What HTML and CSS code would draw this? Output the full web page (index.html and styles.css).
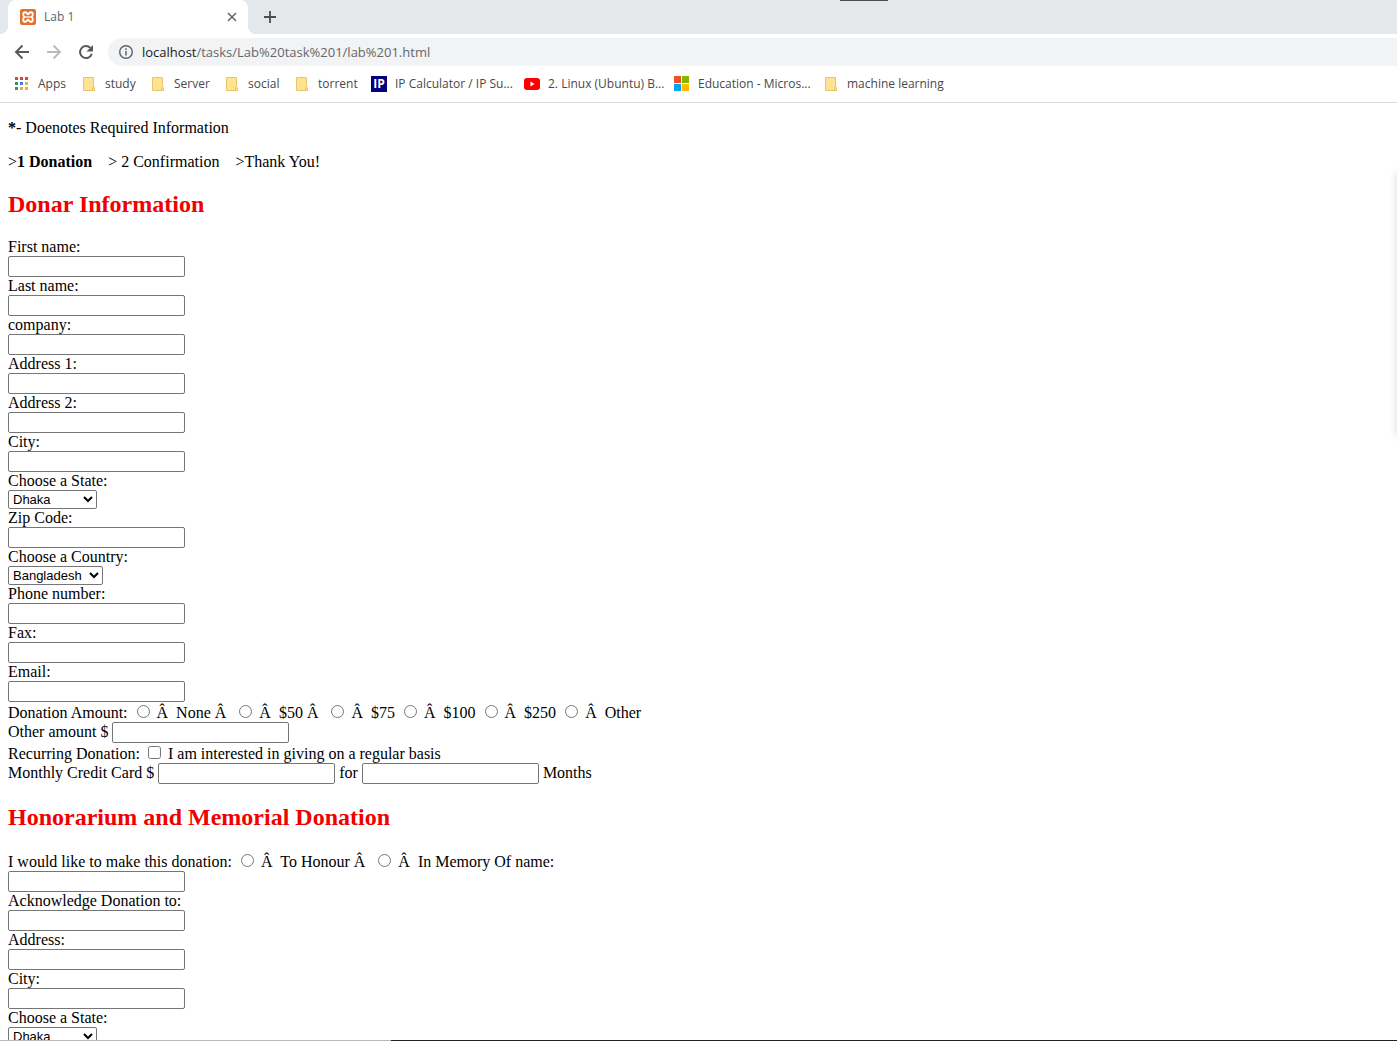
FILE: index.html
```html
<!DOCTYPE html>
<html lang="en">
<head>
<meta charset="utf-8">
<title>Lab 1</title>
<link rel="stylesheet" href="styles.css">
</head>
<body>
<div class="browser">
  <header class="chrome">
    <div class="tab-strip">
      <div class="tab">
        <svg class="favicon" width="16" height="16" viewBox="0 0 16 16" aria-hidden="true"><rect width="16" height="16" rx="2" fill="#e0712c"/><path d="M5.300 3.200C2.600 3.200 2.600 6.800 4.600 8C2.600 9.200 2.600 12.800 5.300 12.800C7.300 12.800 7 10.600 8 10.600C9 10.600 8.700 12.800 10.700 12.800C13.400 12.800 13.400 9.200 11.400 8C13.400 6.800 13.400 3.200 10.700 3.200C8.700 3.200 9 5.400 8 5.400C7 5.400 7.300 3.200 5.300 3.200Z" fill="none" stroke="#fff" stroke-width="1.900"/><path d="M5.500 8H10.500" stroke="#fff" stroke-width="1.300"/></svg>
        <span class="tab-title">Lab 1</span>
        <button class="icon-button" type="button" aria-label="Close tab"><svg width="16" height="16" viewBox="0 0 16 16"><path d="M4 4l8 8M12 4l-8 8" stroke="#5f6368" stroke-width="1.500"/></svg></button>
      </div>
      <button class="icon-button new-tab" type="button" aria-label="New tab"><svg width="16" height="16" viewBox="0 0 16 16"><path d="M8 2v12M2 8h12" stroke="#4a4d51" stroke-width="1.800"/></svg></button>
    </div>
    <div class="toolbar">
      <button class="icon-button" type="button" aria-label="Back"><svg width="16" height="16" viewBox="0 0 16 16"><path d="M15 8H2M8.500 1.500L2 8l6.500 6.500" fill="none" stroke="#55585d" stroke-width="1.900"/></svg></button>
      <button class="icon-button" type="button" aria-label="Forward"><svg width="16" height="16" viewBox="0 0 16 16"><path d="M1 8h13M7.500 1.500L14 8l-6.500 6.500" fill="none" stroke="#b9bbbe" stroke-width="1.900"/></svg></button>
      <button class="icon-button" type="button" aria-label="Reload"><svg width="16" height="16" viewBox="0 0 16 16"><path d="M13.800 9.800A6 6 0 1 1 12.400 3.900" fill="none" stroke="#55585d" stroke-width="2"/><path d="M15 1v6.500H8.500z" fill="#55585d"/></svg></button>
      <div class="address">
        <svg width="16" height="16" viewBox="0 0 16 16" aria-hidden="true"><circle cx="8" cy="8" r="6.300" fill="none" stroke="#5f6368" stroke-width="1.400"/><path d="M8 7v4.500M8 4.300v1.600" stroke="#5f6368" stroke-width="1.500"/></svg>
        <span>localhost<span class="address-path">/tasks/Lab%20task%201/lab%201.html</span></span>
      </div>
    </div>
    <nav class="bookmarks" aria-label="Bookmarks">
      <a href="#"><svg width="16" height="16" viewBox="0 0 16 16"><path d="M1 1h3v3H1zM6 1h3v3H6zM11 1h3v3h-3z" fill="#d4483d"/><path d="M1 6h3v3H1zM1 11h3v3H1z" fill="#35945a"/><path d="M6 6h3v3H6z" fill="#3b80e0"/><path d="M11 6h3v3h-3zM6 11h3v3H6zM11 11h3v3h-3z" fill="#e2b13a"/></svg>Apps</a>
      <a href="#"><svg width="16" height="16" viewBox="0 0 16 16"><path d="M2.500 1.500h10v9l1 1v3h-11z" fill="#ffe392" stroke="#e6c765"/><path d="M11.500 14v-2.500l1-1" fill="none" stroke="#e6c765"/></svg>study</a>
      <a href="#"><svg width="16" height="16" viewBox="0 0 16 16"><path d="M2.500 1.500h10v9l1 1v3h-11z" fill="#ffe392" stroke="#e6c765"/><path d="M11.500 14v-2.500l1-1" fill="none" stroke="#e6c765"/></svg>Server</a>
      <a href="#"><svg width="16" height="16" viewBox="0 0 16 16"><path d="M2.500 1.500h10v9l1 1v3h-11z" fill="#ffe392" stroke="#e6c765"/><path d="M11.500 14v-2.500l1-1" fill="none" stroke="#e6c765"/></svg>social</a>
      <a href="#"><svg width="16" height="16" viewBox="0 0 16 16"><path d="M2.500 1.500h10v9l1 1v3h-11z" fill="#ffe392" stroke="#e6c765"/><path d="M11.500 14v-2.500l1-1" fill="none" stroke="#e6c765"/></svg>torrent</a>
      <a href="#"><span class="ip-icon" aria-hidden="true">IP</span>IP Calculator / IP Su...</a>
      <a href="#"><svg width="16" height="16" viewBox="0 0 16 16"><rect y="2" width="16" height="12" rx="3" fill="#f00"/><path d="M6.500 5.600v4.800l4-2.400z" fill="#fff"/></svg>2. Linux (Ubuntu) B...</a>
      <a href="#"><svg width="16" height="16" viewBox="0 0 16 16"><path d="M0 0h7v7H0z" fill="#f25022"/><path d="M8 0h7v7H8z" fill="#7fba00"/><path d="M0 8h7v7H0z" fill="#00a4ef"/><path d="M8 8h7v7H8z" fill="#ffb900"/></svg>Education - Micros...</a>
      <a href="#"><svg width="16" height="16" viewBox="0 0 16 16"><path d="M2.500 1.500h10v9l1 1v3h-11z" fill="#ffe392" stroke="#e6c765"/><path d="M11.500 14v-2.500l1-1" fill="none" stroke="#e6c765"/></svg>machine learning</a>
    </nav>
  </header>
  <main class="page">
    <p><b>*</b>- Doenotes Required Information</p>
    <p>&gt;<b>1 Donation</b> &nbsp;&nbsp; &gt; 2 Confirmation &nbsp;&nbsp; &gt;Thank You!</p>
    <form>
      <h2>Donar Information</h2>
      <div class="field"><label for="first">First name:</label><input type="text" id="first"></div>
      <div class="field"><label for="last">Last name:</label><input type="text" id="last"></div>
      <div class="field"><label for="company">company:</label><input type="text" id="company"></div>
      <div class="field"><label for="address1">Address 1:</label><input type="text" id="address1"></div>
      <div class="field"><label for="address2">Address 2:</label><input type="text" id="address2"></div>
      <div class="field"><label for="city">City:</label><input type="text" id="city"></div>
      <div class="field"><label for="state">Choose a State:</label><select id="state"><option>Dhaka</option><option>Chittagong</option></select></div>
      <div class="field"><label for="zip">Zip Code:</label><input type="text" id="zip"></div>
      <div class="field"><label for="country">Choose a Country:</label><select id="country" class="country"><option>Bangladesh</option></select></div>
      <div class="field"><label for="phone">Phone number:</label><input type="text" id="phone"></div>
      <div class="field"><label for="fax">Fax:</label><input type="text" id="fax"></div>
      <div class="field"><label for="email">Email:</label><input type="text" id="email"></div>
      <div class="choices">Donation Amount: <input type="radio" name="amount" id="a0"> <label for="a0">Â&nbsp; None Â&nbsp;</label> <input type="radio" name="amount" id="a50"> <label for="a50">Â&nbsp; $50 Â&nbsp;</label> <input type="radio" name="amount" id="a75"> <label for="a75">Â&nbsp; $75</label> <input type="radio" name="amount" id="a100"> <label for="a100">Â&nbsp; $100</label> <input type="radio" name="amount" id="a250"> <label for="a250">Â&nbsp; $250</label> <input type="radio" name="amount" id="other"> <label for="other">Â&nbsp; Other</label></div>
      <div class="inline-field"><label for="other-amount">Other amount $</label> <input type="text" id="other-amount"></div>
      <div class="choices">Recurring Donation: <input type="checkbox" id="recurring"> <label for="recurring">I am interested in giving on a regular basis</label></div>
      <div class="inline-field"><label for="monthly">Monthly Credit Card $</label> <input type="text" id="monthly"> <label for="months">for</label> <input type="text" id="months" aria-describedby="months-unit"> <span id="months-unit">Months</span></div>
      <h2>Honorarium and Memorial Donation</h2>
      <div class="choices">I would like to make this donation: <input type="radio" name="tribute" id="honour"> <label for="honour">Â&nbsp; To Honour Â&nbsp;</label> <input type="radio" name="tribute" id="memory"> <label for="memory">Â&nbsp; In Memory Of</label> <label for="tribute-name">name:</label></div>
      <div class="field"><input type="text" id="tribute-name"></div>
      <div class="field"><label for="ack">Acknowledge Donation to:</label><input type="text" id="ack"></div>
      <div class="field"><label for="ack-address">Address:</label><input type="text" id="ack-address"></div>
      <div class="field"><label for="ack-city">City:</label><input type="text" id="ack-city"></div>
      <div class="field"><label for="ack-state">Choose a State:</label><select id="ack-state"><option>Dhaka</option><option>Chittagong</option></select></div>
    </form>
  </main>
  <div class="window-edge"></div>
  <div class="top-mark"></div>
  <div class="side-shadow"></div>
</div>
</body>
</html>
```
FILE: styles.css
```css
* { box-sizing: border-box; }

body { margin: 0; background: #fff; }

.browser {
  position: relative;
  display: flex;
  flex-direction: column;
  height: 100vh;
  overflow: hidden;
}

.chrome {
  flex: none;
  border-bottom: 1px solid #d9dadc;
  font: 12px/16px "Open Sans", "Noto Sans", sans-serif;
  color: #47494d;
}

svg { display: block; flex: none; }

.icon-button {
  display: block;
  flex: none;
  padding: 0;
  border: 0;
  background: none;
}

.tab-strip {
  display: flex;
  height: 34px;
  padding-left: 8px;
  background: #e4e8eb;
}

.tab {
  position: relative;
  display: flex;
  align-items: center;
  gap: 8px;
  width: 240px;
  padding: 0 8px 0 12px;
  border-radius: 8px 8px 0 0;
  background: #fff;
  color: #5f6368;
}

/* Curved feet where the tab meets the toolbar */
.tab::before,
.tab::after {
  content: "";
  position: absolute;
  bottom: 0;
  width: 8px;
  height: 8px;
}
.tab::before { right: 100%; background: radial-gradient(circle at 0 0, transparent 8px, #fff 8px); }
.tab::after { left: 100%; background: radial-gradient(circle at 100% 0, transparent 8px, #fff 8px); }

.tab-title { flex: 1; }

.new-tab { margin-left: 14px; }

.toolbar {
  display: flex;
  align-items: center;
  gap: 16px;
  height: 36px;
  padding-left: 14px;
}

.address {
  display: flex;
  flex: 1;
  align-items: center;
  gap: 8px;
  height: 28px;
  margin-left: -2px;
  padding-left: 10px;
  border-radius: 14px 0 0 14px;
  background: #f1f3f4;
  font-size: 13px;
  color: #202124;
}

.address-path { color: #64686c; }

.bookmarks {
  display: grid;
  grid-template-columns: 67px 69px 74px 70px 77px 153px 150px 149px auto;
  align-items: center;
  height: 32px;
  padding: 0 0 4px 14px;
}

.bookmarks a {
  display: flex;
  align-items: center;
  gap: 8px;
  color: inherit;
  text-decoration: none;
  white-space: nowrap;
}

.ip-icon {
  width: 16px;
  background: #000080;
  color: #fff;
  font-weight: 700;
  text-align: center;
}

.page {
  flex: 1;
  min-height: 0;
  padding: 0 8px;
  overflow: hidden;
  font: 16px/18px "Liberation Serif", serif;
  color: #000;
}

.page p { margin: 16px 0; }

.page h2 {
  margin: 20px 0;
  font-size: 24px;
  line-height: 27px;
  color: #f20000;
}

.field label,
.field input,
.field select { display: block; }

input[type="text"] {
  width: 177px;
  height: 21px;
  margin: 0;
  border: 1px solid #767676;
  border-radius: 2px;
  background: #fff;
}

select {
  width: 89px;
  height: 19px;
  margin: 0;
  padding: 0;
  border: 1px solid #767676;
  border-radius: 2px;
  background: #fff;
  color: #000;
  font: 13px "Liberation Sans", sans-serif;
}

.country { width: 95px; }

.choices { height: 20px; line-height: 20px; }

.choices input { width: 13px; height: 13px; }

.inline-field { height: 21px; line-height: 20px; }

.inline-field input { vertical-align: top; }

.window-edge {
  flex: none;
  height: 1px;
  background: linear-gradient(90deg, #b8b8b8 28%, #222 28%);
}

.top-mark {
  position: absolute;
  top: 0;
  left: 840px;
  width: 48px;
  height: 1px;
  background: #4a4c50;
}

.side-shadow {
  position: absolute;
  top: 172px;
  left: 100%;
  width: 8px;
  height: 264px;
  box-shadow: 0 0 8px rgba(0, 0, 0, 0.15);
}
```
